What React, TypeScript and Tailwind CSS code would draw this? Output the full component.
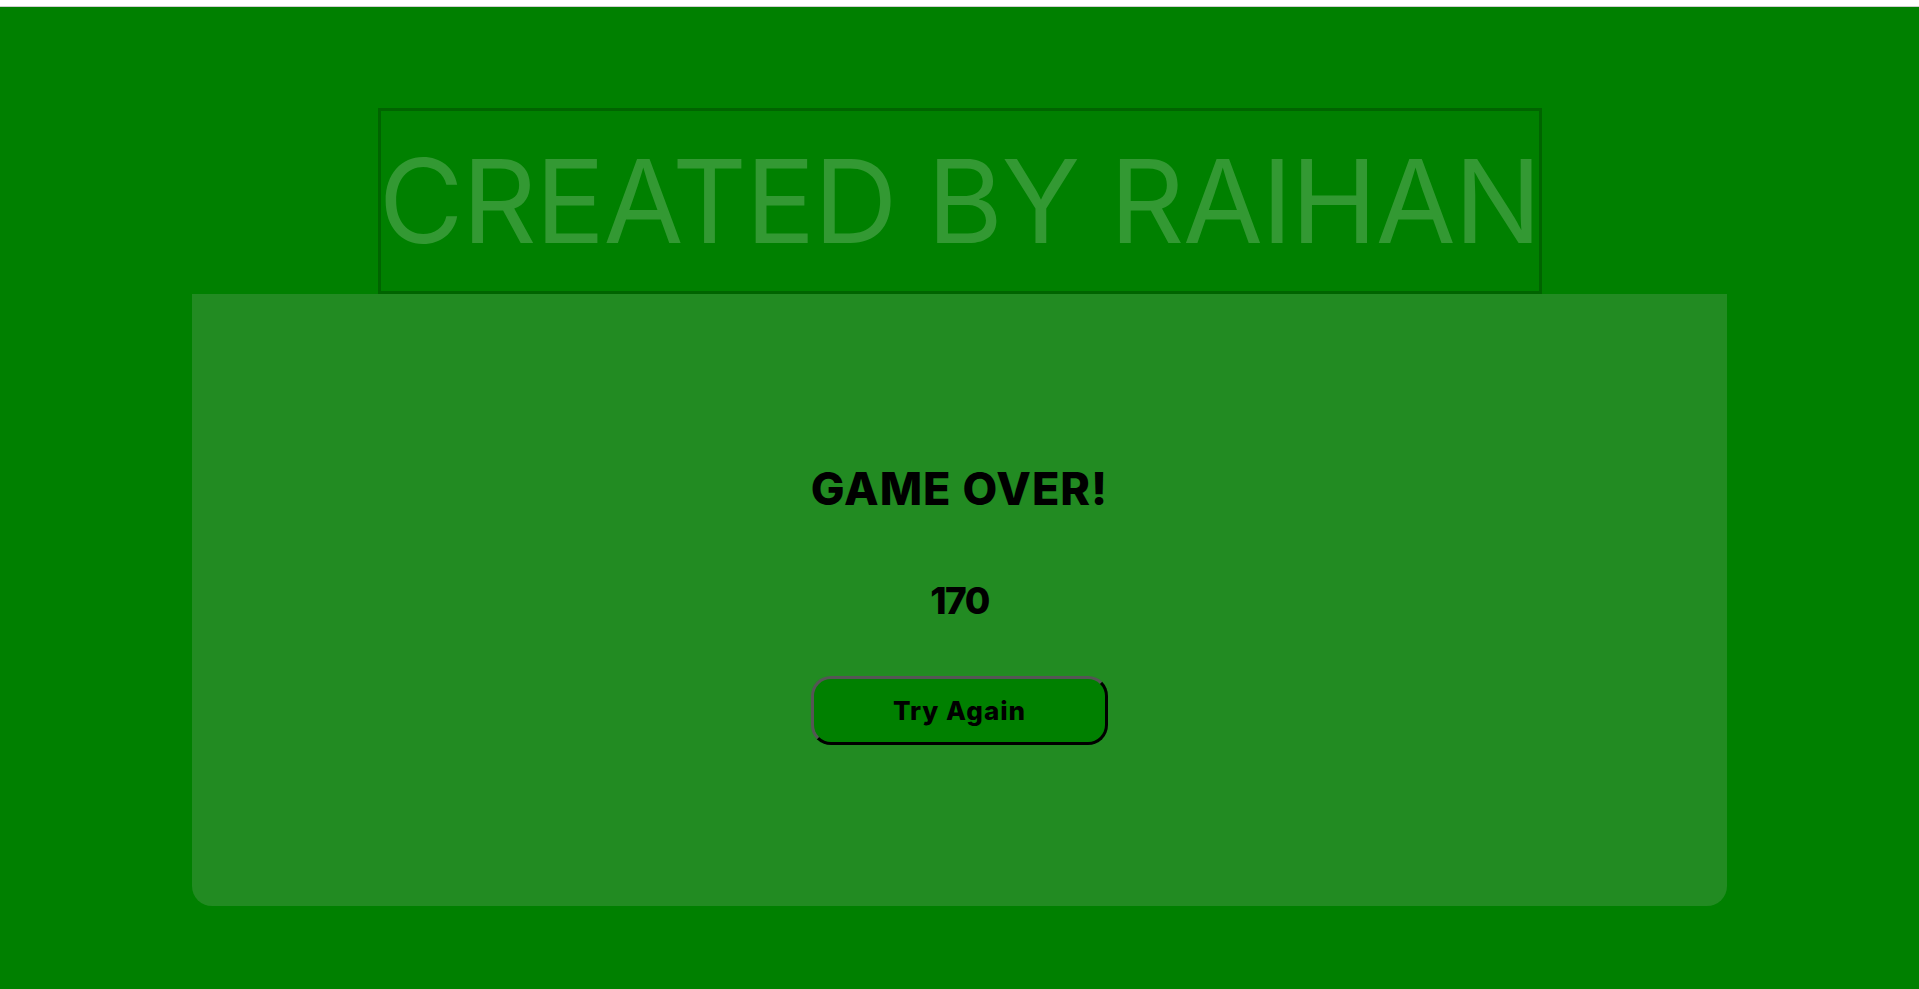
export default function App() {
  return (
    <div className="min-h-[989px] bg-white pt-[6px] font-['Inter',sans-serif]">
      <div className="h-[983px] border-t border-[#d0d0d0] bg-[#008000] pt-[101px]">
        <div className="mx-auto flex h-[186px] w-[1164px] items-center justify-center border-[3px] border-[#006400]">
          <span className="text-[116px] leading-none font-normal tracking-[-1.5px] text-[#339933] whitespace-nowrap">
            CREATED BY RAIHAN
          </span>
        </div>

        <div className="mx-auto flex h-[612px] w-[80%] flex-col items-center rounded-b-[20px] bg-[#228b22] pt-[172px]">
          <h1 className="text-[45px] leading-[45px] font-extrabold tracking-[1px] text-black">GAME OVER!</h1>
          <p className="mt-[71px] text-[37px] leading-[37px] font-extrabold tracking-[-1.5px] text-black">170</p>
          <button className="mt-[57px] flex h-[69px] w-[297px] items-center justify-center rounded-[20px] border-[3px] border-t-[#555555] border-l-[#555555] border-r-black border-b-black bg-[#008000] text-[26px] leading-none font-extrabold tracking-[1px] text-black">
            Try Again
          </button>
        </div>
      </div>
    </div>
  );
}
